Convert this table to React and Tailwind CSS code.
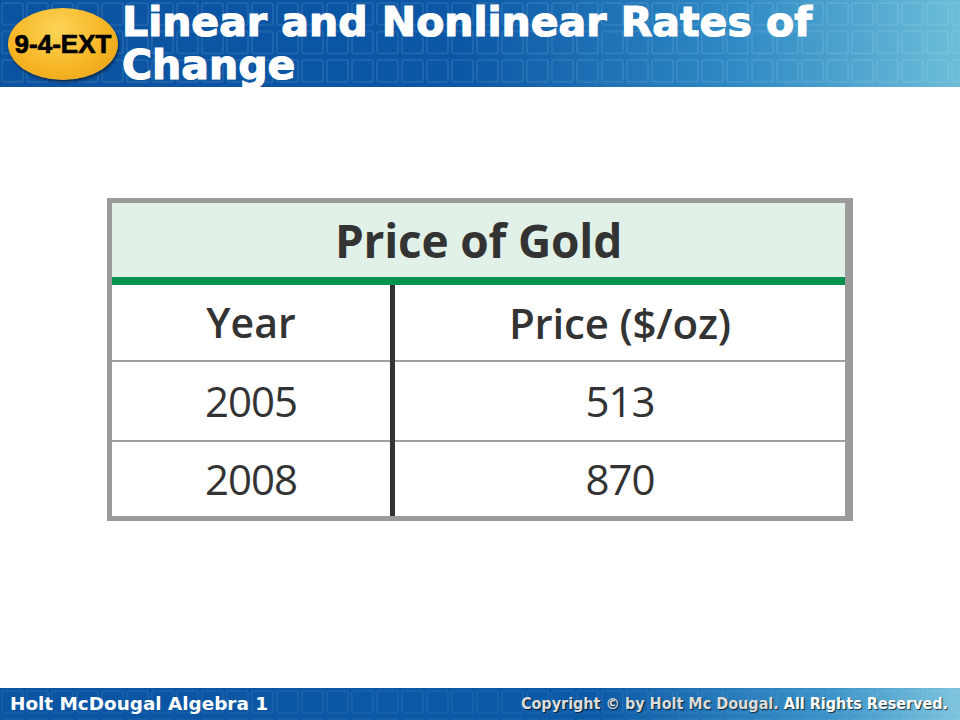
import React from "react";

function Squares({ id, h, opacity = 0.13 }) {
  return (
    <svg className="absolute inset-0 pointer-events-none" width="960" height={h}>
      <defs>
        <pattern id={id} x="0" y="0" width="25" height="28.5" patternUnits="userSpaceOnUse">
          <rect x="2" y="3" width="21" height="22" rx="2" fill="none" stroke="#ffffff" strokeOpacity={opacity} strokeWidth="1.2" />
        </pattern>
      </defs>
      <rect width="960" height={h} fill={`url(#${id})`} />
    </svg>
  );
}

function Cell({ children, h, last, className = "" }) {
  return (
    <div
      className={`flex items-center justify-center ${last ? "" : "border-b-2 border-[#a0a0a0]"} ${className}`}
      style={{ height: h }}
    >
      {children}
    </div>
  );
}

export default function App() {
  const tableFont = { fontFamily: '"Open Sans", "Noto Sans", sans-serif' };
  return (
    <div className="w-[960px] h-[720px] bg-white flex flex-col overflow-hidden">
      {/* Header */}
      <div className="relative h-[87px] shrink-0 bg-[linear-gradient(to_right,#0a53a1_0%,#0b57a5_48%,#2e89c4_76%,#6cbdd8_100%)]">
        <Squares id="hdr" h={87} />
        <div className="relative flex items-start">
          <div className="ml-[8px] mt-[8px] w-[110px] h-[72px] rounded-[50%] bg-[radial-gradient(ellipse_at_45%_30%,#fdd458_0%,#f7b626_55%,#e39a10_100%)] shadow-[1px_2px_3px_rgba(0,0,0,0.55)] flex items-center justify-center shrink-0">
            <span
              className="text-black font-bold text-[26px] leading-none"
              style={{ fontFamily: '"Liberation Sans", Arial, sans-serif', WebkitTextStroke: "0.7px black" }}
            >
              9-4-EXT
            </span>
          </div>
          <div
            className="ml-[4px] mt-[1px] text-white font-bold text-[41px] leading-[43px]"
            style={{ fontFamily: '"DejaVu Sans", Verdana, sans-serif', WebkitTextStroke: "1.2px white" }}
          >
            <div>Linear and Nonlinear Rates of</div>
            <div>Change</div>
          </div>
        </div>
      </div>

      {/* Body */}
      <div className="flex-1">
        <div className="ml-[107px] mt-[111px] w-[746px] border-t-[5px] border-l-[5px] border-b-[5px] border-r-[8px] border-[#9b9b9b] text-[#333333]" style={tableFont}>
          <div className="h-[74px] bg-[#e1f1e7] flex items-center justify-center">
            <span className="text-[46px] font-bold leading-none tracking-[-0.2px]">Price of Gold</span>
          </div>
          <div className="h-[8px] bg-[#00924f]" />
          <div className="flex">
            <div className="w-[283px] border-r-[5px] border-[#333333]">
              <Cell h={77}><span className="text-[41px] font-semibold leading-none">Year</span></Cell>
              <Cell h={80}><span className="text-[42px] leading-none tracking-[-1px]">2005</span></Cell>
              <Cell h={74} last><span className="text-[42px] leading-none tracking-[-1px]">2008</span></Cell>
            </div>
            <div className="flex-1">
              <Cell h={77}><span className="text-[42px] font-semibold leading-none tracking-[-0.2px]">Price ($/oz)</span></Cell>
              <Cell h={80}><span className="text-[42px] leading-none tracking-[-1px]">513</span></Cell>
              <Cell h={74} last><span className="text-[42px] leading-none tracking-[-1px]">870</span></Cell>
            </div>
          </div>
        </div>
      </div>

      {/* Footer */}
      <div className="relative h-[32px] shrink-0 bg-[linear-gradient(to_right,#0a54a2_0%,#0c5aa7_62%,#3a92c8_86%,#7dc4dd_100%)]">
        <Squares id="ftr" h={32} opacity={0.08} />
        <div className="relative h-full flex items-center justify-between pl-[10px] pr-[12px]">
          <span
            className="text-white font-bold text-[18.4px] leading-none"
            style={{ fontFamily: '"DejaVu Sans", Verdana, sans-serif' }}
          >
            Holt McDougal Algebra 1
          </span>
          <span
            className="font-bold text-[16px] leading-none [text-shadow:1px_1px_1px_rgba(0,0,0,0.7)]"
            style={{ fontFamily: '"DejaVu Sans Condensed", "Liberation Sans Narrow", "Liberation Sans", sans-serif' }}
          >
            <span className="text-[#dcdcdc]">Copyright © by Holt Mc Dougal. </span>
            <span className="text-white">All Rights Reserved.</span>
          </span>
        </div>
      </div>
    </div>
  );
}
